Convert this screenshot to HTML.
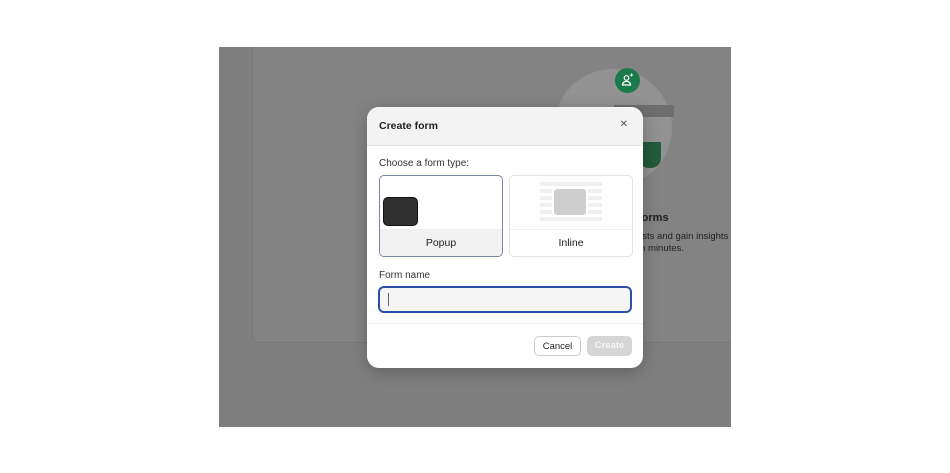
<!DOCTYPE html>
<html><head><meta charset="utf-8"><style>
*{box-sizing:border-box;margin:0;padding:0}
body{width:950px;height:473px;background:#fff;position:relative;overflow:hidden;font-family:"Liberation Sans",sans-serif;}
.bd{position:absolute;left:219px;top:47px;width:512px;height:380px;background:#7f7f7f;overflow:hidden}
.card{position:absolute;left:33px;top:-10px;width:520px;height:306px;background:#838383;border-radius:8px;border:1px solid #787878}
.circ{position:absolute;left:335px;top:22px;width:118px;height:118px;border-radius:50%;background:#929292}
.green{position:absolute;left:396px;top:21px;width:25px;height:25px;border-radius:50%;background:#1a7a4a}
.t1{position:absolute;left:419px;top:165px;font-size:11px;font-weight:bold;color:#1e1e1e;white-space:nowrap}
.t2{position:absolute;left:419px;top:184px;font-size:9.5px;color:#222;line-height:12px;white-space:nowrap}
.modal{position:absolute;left:367px;top:107px;width:276px;height:261px;background:#fff;border-radius:12px;overflow:hidden;box-shadow:0 4px 16px rgba(0,0,0,.25)}
.hd{height:39px;background:#f3f3f3;border-bottom:1px solid #e3e3e3;position:relative}
.hd b{position:absolute;left:12px;top:13px;font-size:10.5px;color:#222}
.x{position:absolute;right:15px;top:12px;font-size:10px;color:#555}
.lab{position:absolute;left:12px;font-size:10px;color:#333}
.opt{position:absolute;top:68px;width:124px;height:82px;border:1px solid #e3e3e3;border-radius:5px;overflow:hidden;background:#fff}
.opt .f{position:absolute;bottom:0;left:0;right:0;height:27px;border-top:1px solid #eee;text-align:center;font-size:10.5px;color:#222;line-height:27px}
.inp{position:absolute;left:11px;top:179px;width:254px;height:27px;border:2px solid #2d4fa8;border-radius:6px;background:#f5f5f5}
.inp i{position:absolute;left:8px;top:5px;width:1px;height:13px;background:#666}
.ft{position:absolute;left:0;right:0;top:216px;border-top:1px solid #ececec}
.btn{position:absolute;top:229px;height:20px;border-radius:5px;font-size:9.5px;text-align:center;line-height:19px}
</style></head><body>
<div class="bd">
 <div class="card"></div>
 <div class="circ"></div>
 <div style="position:absolute;left:395px;top:58px;width:60px;height:12px;background:#6e6e6e"></div>
 <div style="position:absolute;left:420px;top:95px;width:22px;height:26px;background:#245a3c;border-radius:0 0 10px 10px"></div>
 <div class="green"><svg width="25" height="25" viewBox="0 0 25 25"><circle cx="11.5" cy="10" r="2.3" fill="none" stroke="#fff" stroke-width="1.2"/><path d="M7.5 17c0-2.5 2-3.7 4-3.7s4 1.2 4 3.7z" fill="none" stroke="#fff" stroke-width="1.2"/><path d="M15 7h3M16.5 5.5v3" stroke="#fff" stroke-width="1"/></svg></div>
 <div class="t1">forms</div>
 <div class="t2">lists and gain insights<br>in minutes.</div>
</div>
<div class="modal">
 <div class="hd"><b>Create form</b><span class="x">✕</span></div>
 <div class="lab" style="top:51px">Choose a form type:</div>
 <div class="opt" style="left:12px;border-color:#7b86a6;">
  <div style="position:absolute;left:3px;top:21px;width:35px;height:29px;background:#303030;border-radius:5px;border:1px solid #111"></div>
  <div class="f" style="background:#f1f1f1">Popup</div>
 </div>
 <div class="opt" style="left:142px">
  <div style="position:absolute;left:30px;top:6px;width:62px;height:41px;background:repeating-linear-gradient(#f0f0f0 0 4px,#fff 4px 7px)"></div>
  <div style="position:absolute;left:42px;top:11px;width:36px;height:30px;background:#cecece;border-radius:5px;border:2px solid #fff"></div>
  <div class="f">Inline</div>
 </div>
 <div class="lab" style="top:163px">Form name</div>
 <div class="inp"><i></i></div>
 <div class="ft"></div>
 <div class="btn" style="left:167px;width:47px;border:1px solid #ccc;color:#222;background:#fff">Cancel</div>
 <div class="btn" style="left:220px;width:45px;background:#d6d6d6;color:#f5f5f5;font-weight:bold">Create</div>
</div>
</body></html>
